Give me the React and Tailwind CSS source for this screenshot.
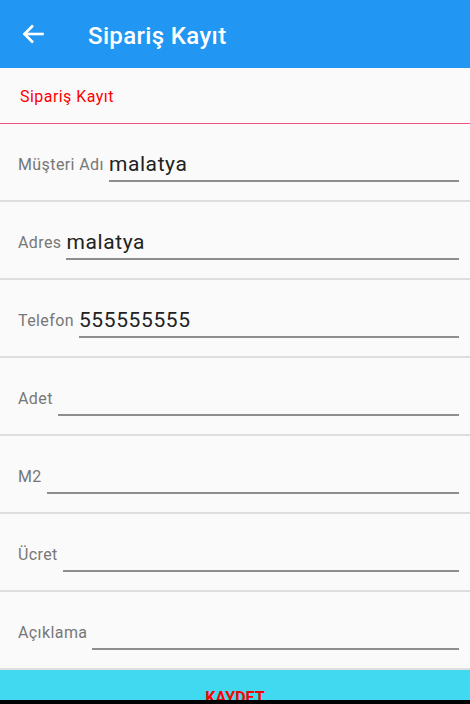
import React from 'react';

const fields = [
  { label: 'Müşteri Adı', value: 'malatya' },
  { label: 'Adres', value: 'malatya' },
  { label: 'Telefon', value: '555555555' },
  { label: 'Adet', value: '' },
  { label: 'M2', value: '' },
  { label: 'Ücret', value: '' },
  { label: 'Açıklama', value: '' },
];

function BackArrow() {
  return (
    <svg width="22" height="22" viewBox="0 0 22 22" fill="none" stroke="white" strokeWidth="2.6" strokeLinecap="square">
      <path d="M20.5 11H3" />
      <path d="M11 2.5L2.5 11L11 19.5" strokeLinecap="butt" />
    </svg>
  );
}

function FieldRow({ label, value }) {
  return (
    <div className="h-[78px] flex items-end pl-[18px] pr-[11px] pb-[18px] border-b-2 border-[#dedede]">
      <span className="text-[16px] leading-none tracking-[0.4px] text-[#777777] mb-[9px] whitespace-nowrap">{label}</span>
      <div className="flex-1 ml-[5px] h-[30px] border-b-2 border-[#8e8e8e] flex items-end pb-[5px] text-[21px] leading-none tracking-[0.6px] text-[#222222]">
        {value}
      </div>
    </div>
  );
}

export default function App() {
  return (
    <div
      className="w-[470px] h-[704px] bg-[#fafafa] overflow-hidden flex flex-col"
      style={{ fontFamily: 'Roboto, "Noto Sans", sans-serif' }}
    >
      {/* Header */}
      <div className="h-[68px] shrink-0 bg-[#2196f3] flex items-center pl-[22px]">
        <BackArrow />
        <h1 className="ml-[44px] mt-[3px] text-[24px] leading-none tracking-[0.35px] font-medium text-white">Sipariş Kayıt</h1>
      </div>

      {/* Subtitle */}
      <div className="h-[56px] shrink-0 pt-[21px] pl-[20px] border-b border-[#e8557f]">
        <span className="text-[16px] leading-none tracking-[0.45px] text-[#ff0000] block">Sipariş Kayıt</span>
      </div>

      {/* Form */}
      <div className="shrink-0">
        {fields.map((f) => (
          <FieldRow key={f.label} label={f.label} value={f.value} />
        ))}
      </div>

      {/* Save */}
      <div className="h-[30px] shrink-0 bg-[#41d9f0] overflow-hidden flex justify-center pt-[20px]">
        <span className="text-[16px] leading-none font-bold text-[#ff0000]">KAYDET</span>
      </div>
      <div className="h-[4px] shrink-0 bg-black" />
    </div>
  );
}
